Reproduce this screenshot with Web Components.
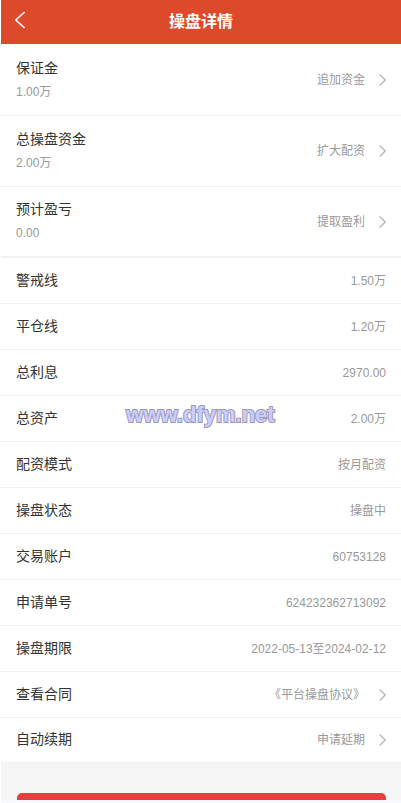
<!DOCTYPE html>
<html lang="zh-CN">
<head>
<meta charset="utf-8">
<meta name="viewport" content="width=device-width, initial-scale=1">
<title>操盘详情</title>
<style>
body { margin: 0; background: #f8f9fe; font-family: "Liberation Sans", "Noto Sans CJK SC", sans-serif; }
</style>
</head>
<body>
<trade-page></trade-page>
<script>
const define = (name, html, setup) => {
  const template = document.createElement('template');
  template.innerHTML = html;
  customElements.define(name, class extends HTMLElement {
    constructor() {
      super();
      this.attachShadow({ mode: 'open' }).append(template.content.cloneNode(true));
    }
    connectedCallback() { if (setup) setup(this); }
  });
};

define('chevron-icon', `
<style>
:host { display: block; width: 8px; height: 12px; flex: none; }
svg { display: block; width: 100%; height: 100%; }
</style>
<svg viewBox="0 0 8 12" fill="none" stroke="#b8b8b8" stroke-width="1.4" aria-hidden="true"><path d="M1.6 .6 7.2 6l-5.6 5.4"/></svg>`);

define('nav-bar', `
<style>
:host { display: grid; grid-template-columns: 44px 1fr 44px; align-items: center; height: 44px; flex: none; background: #dd4a2b; color: #fff; }
button { display: flex; align-items: center; height: 40px; padding: 0 0 4px 13px; border: 0; background: none; color: inherit; }
h1 { margin: 0; font-size: 16px; line-height: 24px; font-weight: 700; text-align: center; }
</style>
<button type="button" aria-label="返回"><svg width="12" height="18" viewBox="0 0 12 18" fill="none" stroke="currentColor" stroke-width="1.6"><path d="M10.6 1 1.8 9l8.8 8"/></svg></button>
<h1><slot></slot></h1>`);

define('detail-row', `
<style>
:host { display: flex; align-items: center; box-sizing: border-box; height: 46px; padding: 0 15px; background: #fff; border-bottom: 1px solid #f1f1f1; font-size: 12px; line-height: 18px; color: #999; }
:host([tall]) { height: 71px; }
:host(:last-of-type:not([tall])) { height: 45px; }
.text { flex: 1; display: flex; flex-direction: column; gap: 5px; padding-bottom: 2px; }
.label { font-size: 14px; line-height: 20px; color: #333; }
.note:empty { display: none; }
</style>
<div class="text"><span class="label"></span><span class="note"></span></div>
<slot></slot>`, el => {
  const root = el.shadowRoot;
  root.querySelector('.label').textContent = el.getAttribute('label');
  root.querySelector('.note').textContent = el.getAttribute('note') || '';
});

define('row-link', `
<style>
:host { display: block; }
a { display: flex; align-items: center; gap: 13px; color: inherit; text-decoration: none; }
</style>
<a href="#"><slot></slot><chevron-icon></chevron-icon></a>`);

define('site-mark', `
<style>
:host { display: block; position: absolute; left: 0; right: 0; top: 50%; text-align: center; font-size: 22px; line-height: 26px; font-weight: 700; color: #ccccff; -webkit-text-stroke: 2px #9a9ab4; paint-order: stroke fill; pointer-events: none; }
</style>
<slot></slot>`);

define('action-bar', `
<style>
:host { display: block; flex: 1; min-height: 0; padding: 30px 15px 0 16px; background: #f5f5f5; overflow: hidden; }
button { display: block; width: 100%; height: 44px; border: 0; border-radius: 5px; background: #e5403e; }
</style>
<button type="button" aria-label="提交"></button>`);

define('trade-page', `
<style>
:host { display: flex; flex-direction: column; box-sizing: border-box; position: relative; height: 100vh; padding: 0 0 3px 1px; overflow: hidden; background: linear-gradient(to right, #fff 1px, #f8f9fe 1px); }
section { flex: none; }
.funds { padding-top: 1px; background: #fff; }
.funds detail-row:last-of-type { border-bottom: 2px solid #f1f1f1; }
</style>
<nav-bar>操盘详情</nav-bar>
<section class="funds">
  <detail-row tall label="保证金" note="1.00万"><row-link>追加资金</row-link></detail-row>
  <detail-row tall label="总操盘资金" note="2.00万"><row-link>扩大配资</row-link></detail-row>
  <detail-row tall label="预计盈亏" note="0.00"><row-link>提取盈利</row-link></detail-row>
</section>
<section>
  <detail-row label="警戒线">1.50万</detail-row>
  <detail-row label="平仓线">1.20万</detail-row>
  <detail-row label="总利息">2970.00</detail-row>
  <detail-row label="总资产">2.00万</detail-row>
  <detail-row label="配资模式">按月配资</detail-row>
  <detail-row label="操盘状态">操盘中</detail-row>
  <detail-row label="交易账户">60753128</detail-row>
  <detail-row label="申请单号">624232362713092</detail-row>
  <detail-row label="操盘期限">2022-05-13至2024-02-12</detail-row>
  <detail-row label="查看合同"><row-link>《平台操盘协议》</row-link></detail-row>
  <detail-row label="自动续期"><row-link>申请延期</row-link></detail-row>
</section>
<action-bar></action-bar>
<site-mark>www.dfym.net</site-mark>`);
</script>
</body>
</html>
